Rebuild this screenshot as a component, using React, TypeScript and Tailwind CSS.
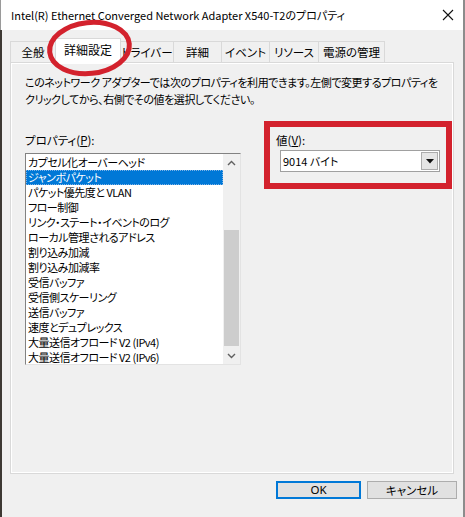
import React from "react";

const items = [
  "カプセル化オーバーヘッド",
  "ジャンボパケット",
  "パケット優先度と VLAN",
  "フロー制御",
  "リンク・ステート・イベントのログ",
  "ローカル管理されるアドレス",
  "割り込み加減",
  "割り込み加減率",
  "受信バッファ",
  "受信側スケーリング",
  "送信バッファ",
  "速度とデュプレックス",
  "大量送信オフロード V2 (IPv4)",
  "大量送信オフロード V2 (IPv6)",
];

const tabs = [
  { label: "全般", w: "w-[46px]" },
  { label: "詳細設定", w: "w-[66px]", sel: true },
  { label: "ドライバー", w: "w-[54px]" },
  { label: "詳細", w: "w-[49px]" },
  { label: "イベント", w: "w-[49px]" },
  { label: "リソース", w: "w-[50px]" },
  { label: "電源の管理", w: "w-[67px]" },
];

export default function App() {
  return (
    <div className="relative w-[465px] h-[517px] overflow-hidden bg-[#f0f0f0] text-black font-['Noto_Sans_CJK_JP','Noto_Sans',sans-serif] [font-feature-settings:'palt'] flex flex-col border-r-2 border-r-[#8c8c8c]">
      {/* Title bar */}
      <div className="h-[30px] bg-white flex items-center justify-between pl-[10px] pr-[8px] border-l border-l-[#9a9a9a] shrink-0">
        <span className="text-[11px] leading-[16px] whitespace-nowrap">
          Intel(R) Ethernet Converged Network Adapter X540-T2のプロパティ
        </span>
        <svg width="12" height="12" viewBox="0 0 12 12" className="mr-[1px]">
          <path d="M1 1 L11 11 M11 1 L1 11" stroke="#111" strokeWidth="1.1" />
        </svg>
      </div>

      {/* Body */}
      <div className="flex-1 flex flex-col border-l-2 border-l-[#3d3833] pl-[8px]">
        {/* Tabs */}
        <div className="flex items-end h-[24px] mt-[8px] relative z-10">
          {tabs.map((t, i) =>
            t.sel ? (
              <div
                key={i}
                className={`${t.w} h-[25px] -mb-px bg-white border border-b-0 border-[#d9d9d9] -ml-px flex items-center justify-center text-[12px] leading-[16px] pb-[3px] whitespace-nowrap relative z-10`}
              >
                {t.label}
              </div>
            ) : (
              <div
                key={i}
                className={`${t.w} h-[21px] bg-[#f0f0f0] border border-b-0 border-[#d9d9d9] ${i === 0 ? "" : "-ml-px"} flex items-center justify-center text-[11.5px] leading-[16px] whitespace-nowrap`}
              >
                {t.label}
              </div>
            )
          )}
        </div>

        {/* Panel */}
        <div className="w-[444px] h-[412px] border border-[#d9d9d9] bg-[#f0f0f0] flex flex-col">
          <div className="flex-1 border border-white pl-[13px] pt-[10px] flex flex-col">
            <p className="text-[11px] leading-[17px] tracking-[-0.45px] whitespace-nowrap">
              このネットワーク アダプターでは次のプロパティを利用できます。左側で変更するプロパティを
              <br />
              クリックしてから、右側でその値を選択してください。
            </p>

            <div className="flex items-start mt-[17px]">
              {/* Left column */}
              <div className="w-[216px] pt-[7px] flex flex-col">
                <div className="text-[11.5px] leading-[16px]">
                  プロパティ(<span className="underline">P</span>):
                </div>
                <div className="mt-[5px] h-[212px] border border-[#828282] border-b-[#e3e3e3] border-r-[#e3e3e3] bg-white flex">
                  <div className="flex-1 flex flex-col pt-px overflow-hidden">
                    {items.map((it, i) => (
                      <div
                        key={i}
                        className={`h-[15px] leading-[15px] text-[11px] tracking-[-0.5px] pl-[2px] whitespace-nowrap ${
                          i === 1
                            ? "bg-[#0078d7] text-white outline outline-1 outline-dotted outline-[#7fb3e6] -outline-offset-1"
                            : ""
                        }`}
                      >
                        {it}
                      </div>
                    ))}
                  </div>
                  <div className="w-[17px] bg-[#f0f0f0] flex flex-col">
                    <div className="h-[17px] flex items-center justify-center">
                      <svg width="9" height="6" viewBox="0 0 9 6">
                        <path d="M1 5 L4.5 1.5 L8 5" fill="none" stroke="#606060" strokeWidth="1.4" />
                      </svg>
                    </div>
                    <div className="flex-1 flex flex-col px-[1px]">
                      <div className="mt-[59px] h-[116px] bg-[#cdcdcd]" />
                    </div>
                    <div className="h-[17px] flex items-center justify-center">
                      <svg width="9" height="6" viewBox="0 0 9 6">
                        <path d="M1 1 L4.5 4.5 L8 1" fill="none" stroke="#606060" strokeWidth="1.4" />
                      </svg>
                    </div>
                  </div>
                </div>
              </div>

              {/* Right column: value with red annotation box */}
              <div className="ml-[23px] -mt-[4px] w-[188px] h-[68px] border-[6px] border-[#d3222d] pt-[5px] flex flex-col">
                <div className="text-[11.5px] leading-[16px] pl-[6px]">
                  値(<span className="underline">V</span>):
                </div>
                <div className="ml-[10px] mt-[2px] w-[160px] h-[22px] bg-white border border-[#a0a0a0] flex items-center justify-between pl-[2px] pr-[1px]">
                  <span className="text-[11px] leading-[16px]">9014 バイト</span>
                  <div className="w-[17px] h-[18px] bg-[#e5e5e5] border border-[#acacac] flex items-center justify-center">
                    <svg width="8" height="5" viewBox="0 0 8 5">
                      <path d="M0 0 L8 0 L4 4.5 Z" fill="#111" />
                    </svg>
                  </div>
                </div>
              </div>
            </div>
          </div>
        </div>

        {/* Buttons */}
        <div className="flex justify-end gap-[6px] mt-[7px] pr-[6px]">
          <button className="w-[85px] h-[18px] bg-[#e1e1e1] border-2 border-[#0078d7] text-[11.5px] leading-[14px] font-['Noto_Sans','Noto_Sans_CJK_JP',sans-serif] flex items-center justify-center">
            OK
          </button>
          <button className="w-[90px] h-[18px] bg-[#e1e1e1] border border-[#adadad] text-[11.5px] leading-[14px] flex items-center justify-center">
            キャンセル
          </button>
        </div>
      </div>

      {/* Red hand-drawn ellipse annotation around the tab */}
      <svg
        className="absolute left-0 top-0 pointer-events-none z-20"
        width="465"
        height="120"
        viewBox="0 0 465 120"
      >
        <ellipse
          cx="89.5"
          cy="48"
          rx="40"
          ry="25.5"
          transform="rotate(-6 89.5 48)"
          fill="none"
          stroke="#d3222d"
          strokeWidth="5"
        />
      </svg>
    </div>
  );
}
